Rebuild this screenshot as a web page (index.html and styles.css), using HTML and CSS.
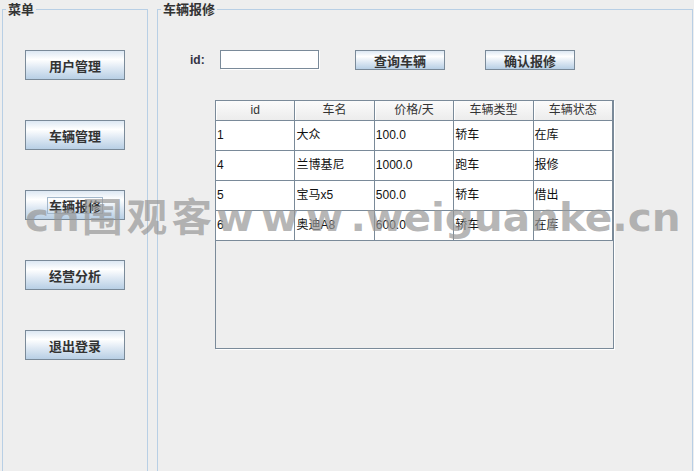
FILE: index.html
```html
<!DOCTYPE html>
<html lang="zh">
<head>
<meta charset="utf-8">
<title>车辆报修</title>
<link rel="stylesheet" href="styles.css">
</head>
<body>
<div class="window">
  <fieldset class="panel menu">
    <legend>菜单</legend>
    <div class="menu-list">
      <button class="btn side">用户管理</button>
      <button class="btn side">车辆管理</button>
      <button class="btn side"><span class="focus">车辆报修</span></button>
      <button class="btn side">经营分析</button>
      <button class="btn side">退出登录</button>
    </div>
  </fieldset>
  <fieldset class="panel main">
    <legend>车辆报修</legend>
    <div class="toolbar">
      <label class="id-label">id:</label>
      <input class="field" type="text">
      <button class="btn small">查询车辆</button>
      <button class="btn small">确认报修</button>
    </div>
    <div class="scroll">
      <div class="grid">
        <div class="th">id</div><div class="th">车名</div><div class="th">价格/天</div><div class="th">车辆类型</div><div class="th">车辆状态</div>
        <div class="td">1</div><div class="td">大众</div><div class="td">100.0</div><div class="td">轿车</div><div class="td">在库</div>
        <div class="td">4</div><div class="td">兰博基尼</div><div class="td">1000.0</div><div class="td">跑车</div><div class="td">报修</div>
        <div class="td">5</div><div class="td">宝马x5</div><div class="td">500.0</div><div class="td">轿车</div><div class="td">借出</div>
        <div class="td">6</div><div class="td">奥迪A8</div><div class="td">600.0</div><div class="td">轿车</div><div class="td">在库</div>
      </div>
    </div>
  </fieldset>
</div>
<div class="watermark"><span class="wm-cn">cn</span><span class="wm-cjk">围观客</span><span class="wm-www">www</span><span class="wm-rest">.weiguanke.cn</span></div>
</body>
</html>
```
FILE: styles.css
```css
* { box-sizing: border-box; }

body {
  margin: 0;
  height: 471px;
  overflow: hidden;
  position: relative;
  background: #eeeeee;
  font-family: "Liberation Sans", "Noto Sans CJK SC", sans-serif;
  color: #333333;
}

.window {
  display: flex;
  gap: 9px;
  padding: 2px 1px 0 2px;
  height: 471px;
}

.panel {
  margin: 0;
  padding: 0;
  min-width: 0;
  border: 1px solid #b8cfe5;
  border-bottom: none;
}

.panel legend {
  margin-left: 3px;
  padding: 0 2px;
  font-family: "Noto Sans CJK SC", sans-serif;
  font-size: 13px;
  font-weight: bold;
  line-height: 14px;
  color: #333333;
}

.menu {
  width: 146px;
  flex: none;
}

.menu-list {
  display: flex;
  flex-direction: column;
  gap: 40px;
  padding: 34px 0 0 22px;
}

.main {
  flex: 1;
}

.btn {
  margin: 0;
  padding: 0;
  border: 1px solid #7a8a99;
  background: linear-gradient(to bottom, #dde8f3 0%, #ffffff 30%, #dde8f3 62%, #b8cfe5 100%);
  font-family: "Noto Sans CJK SC", sans-serif;
  font-size: 13px;
  font-weight: bold;
  color: #333333;
  display: flex;
  align-items: center;
  justify-content: center;
}

.side {
  width: 100px;
  height: 30px;
}

.focus {
  outline: 1px solid #a3b8cc;
  padding: 0 1px;
  line-height: 15px;
}

.toolbar {
  display: flex;
  align-items: flex-start;
  padding: 34px 0 0 32px;
  height: 54px;
}

.id-label {
  width: 30px;
  line-height: 20px;
  font-size: 12px;
  font-weight: bold;
  color: #333344;
}

.field {
  width: 99px;
  height: 19px;
  margin: 0 36px 0 0;
  padding: 0;
  border: 1px solid #7a8a99;
  box-shadow: 1px 1px 0 #ffffff;
  background: #ffffff;
}

.small {
  width: 90px;
  height: 20px;
  margin-right: 40px;
}

.scroll {
  margin: 30px 0 0 57px;
  width: 399px;
  height: 249px;
  border: 1px solid #7a8a99;
  box-shadow: 1px 1px 0 #ffffff;
  background: #eeeeee;
}

.grid {
  display: grid;
  grid-template-columns: repeat(5, 1fr);
  grid-template-rows: 20px repeat(4, 30px);
}

.th {
  border-right: 1px solid #7a8a99;
  border-bottom: 1px solid #7a8a99;
  background: linear-gradient(to bottom, #fbfbfb, #ececec);
  box-shadow: inset 1px 0 0 #ffffff;
  text-align: center;
  font-size: 12px;
  line-height: 19px;
  color: #333333;
}

.td {
  border-right: 1px solid #7a8a99;
  border-bottom: 1px solid #7a8a99;
  background: #ffffff;
  padding-left: 1px;
  font-size: 12px;
  line-height: 29px;
  color: #111111;
  white-space: nowrap;
  overflow: hidden;
}

.watermark {
  position: absolute;
  left: 25px;
  top: 198px;
  font-family: "DejaVu Sans", "Noto Sans CJK SC", sans-serif;
  font-weight: bold;
  font-size: 39px;
  line-height: 39px;
  color: rgba(150, 150, 150, 0.7);
  white-space: nowrap;
  pointer-events: none;
  transform: scaleX(1.04);
  transform-origin: left center;
}

.wm-cn { letter-spacing: 2px; }
.wm-cjk { letter-spacing: 4px; }
.wm-www { letter-spacing: 7px; }
.wm-rest { letter-spacing: 0; }
```
